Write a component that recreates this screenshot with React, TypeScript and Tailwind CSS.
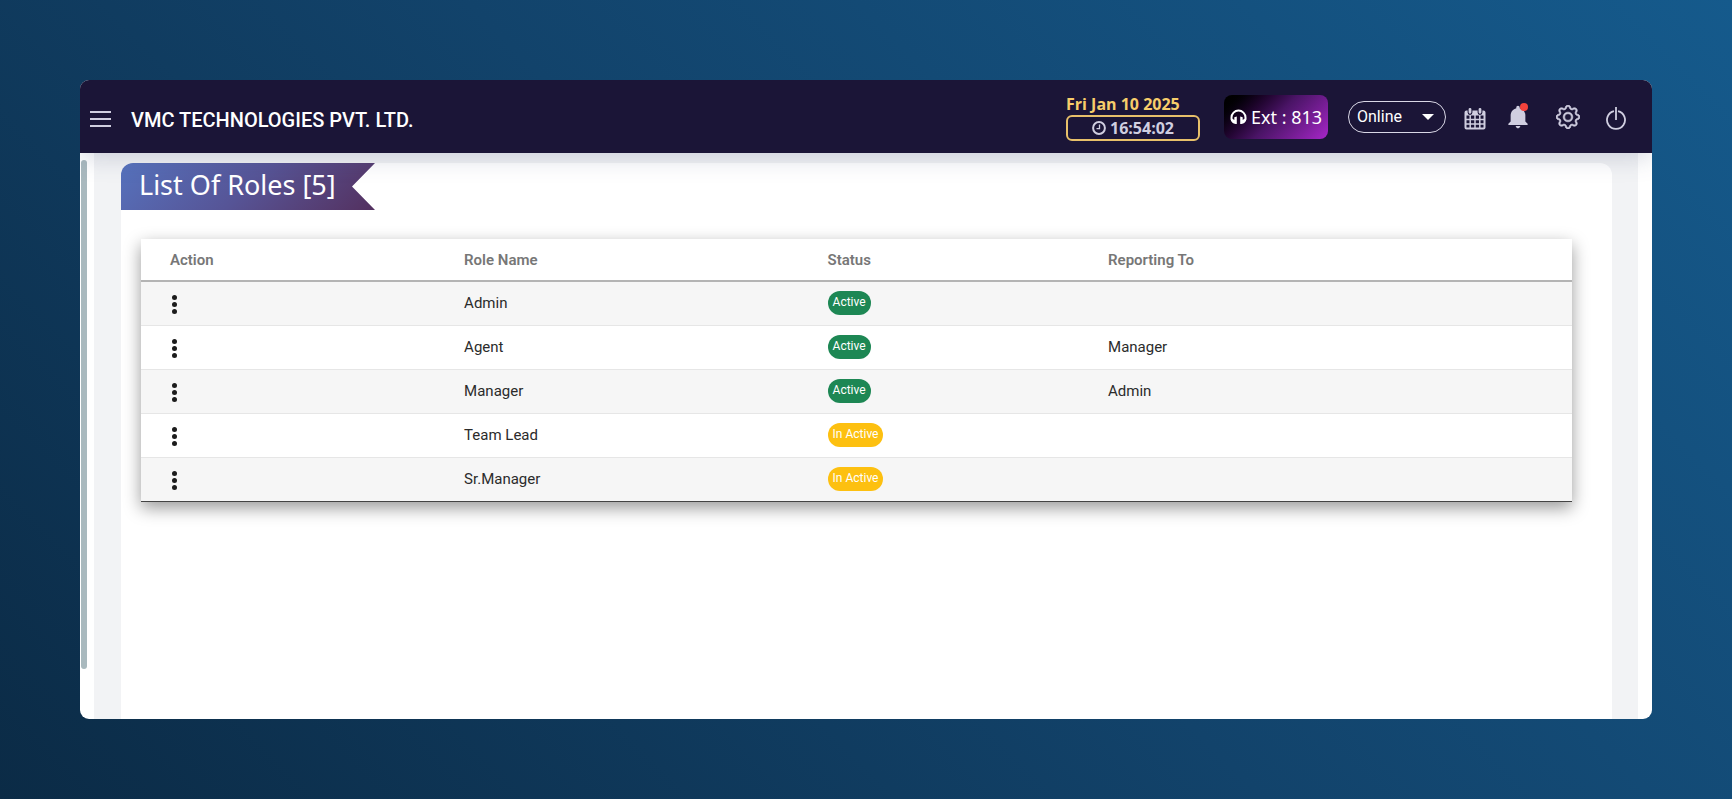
import { BsGear } from "react-icons/bs"
import { IoMdNotifications } from "react-icons/io"

type Role = {
  name: string
  active: boolean
  reportingTo: string
}

const roles: Role[] = [
  { name: "Admin", active: true, reportingTo: "" },
  { name: "Agent", active: true, reportingTo: "Manager" },
  { name: "Manager", active: true, reportingTo: "Admin" },
  { name: "Team Lead", active: false, reportingTo: "" },
  { name: "Sr.Manager", active: false, reportingTo: "" },
]

function HeadphonesIcon() {
  return (
    <svg viewBox="0 0 17 16" className="h-4 w-[17px]" fill="currentColor" aria-hidden="true">
      <path d="M1.500 10.500V8.500a7 6.900 0 0 1 14 0v2" fill="none" stroke="currentColor" strokeWidth="2" />
      <path d="M6.800 7.500v7.500H5.600C3 14.500.8 12.800.6 10.200L2.500 9.800 4.300 11V8.300z" />
      <path d="M10.200 7.500v7.500h1.200c2.600-.5 4.800-2.200 5-4.800l-1.900-.4-1.800 1.200V8.300z" />
    </svg>
  )
}

function ClockIcon() {
  return (
    <svg viewBox="0 0 14 14" className="h-[14px] w-[14px]" fill="none" stroke="currentColor" aria-hidden="true">
      <circle cx="7" cy="7" r="5.900" strokeWidth="2" />
      <path d="M7.500 3.500v4.200H4.500" strokeWidth="1.300" />
    </svg>
  )
}

function CalendarIcon() {
  return (
    <svg viewBox="0 0 22 23" className="h-[23px] w-[22px]" fill="none" stroke="currentColor" aria-hidden="true">
      <path d="M1 4h20v4.500H1z" fill="currentColor" stroke="none" />
      <rect x="1.500" y="4.500" width="19" height="17" rx="1" strokeWidth="2" />
      <path d="M2 12.500h18M2 17h18M6.200 8v14M11 8v14M15.800 8v14" strokeWidth="1.500" />
      <path d="M6 2.500v3M16 2.500v3" stroke="#1b1537" strokeWidth="4.800" strokeLinecap="round" />
      <path d="M6 2.300v3M16 2.300v3" strokeWidth="2.800" strokeLinecap="round" />
    </svg>
  )
}

function PowerIcon() {
  return (
    <svg viewBox="0 0 20 23" className="h-[23px] w-5" fill="none" stroke="currentColor" strokeWidth="1.800" aria-hidden="true">
      <path d="M8 4.200a9 9 0 1 0 4 0" />
      <path d="M10 0v13" />
    </svg>
  )
}

function Header() {
  return (
    <header className="relative z-10 flex h-[73px] shrink-0 items-center justify-between bg-[#1b1537] pl-[10px] pr-[26px] text-[#d0cee0] shadow-[0_4px_24px_rgba(80,90,130,0.25)]">
      <div className="flex items-center gap-5 pt-1">
        <button type="button" aria-label="Toggle menu" className="flex w-[21px] flex-col gap-[5px]">
          <span className="h-[2px] w-full bg-current" />
          <span className="h-[2px] w-full bg-current" />
          <span className="h-[2px] w-full bg-current" />
        </button>
        <h1 className="pt-[2px] font-[Roboto] text-xl leading-6 font-medium text-white">VMC TECHNOLOGIES PVT. LTD.</h1>
      </div>
      <div className="flex items-center">
        <div className="mr-6 w-[134px] pt-[2px] font-['Open_Sans',sans-serif] text-base font-bold">
          <div className="leading-5 text-[#f7cd6b]">Fri Jan 10 2025</div>
          <div className="mt-px flex h-[26px] items-center justify-center gap-1 rounded-md border-2 border-[#e8c06a]">
            <ClockIcon />
            16:54:02
          </div>
        </div>
        <div className="mr-5 flex h-11 w-[104px] items-center justify-center gap-1 rounded-lg bg-linear-135 from-black via-[#4a1466] to-[#a826c9] font-['Noto_Sans',sans-serif] text-lg text-white">
          <HeadphonesIcon />
          Ext : 813
        </div>
        <div className="relative mr-[18px]">
          <select aria-label="Agent status" className="h-8 w-[98px] appearance-none rounded-full border border-[#d9d7e6] pl-2 font-[Roboto] text-base text-white">
            <option>Online</option>
          </select>
          <span className="pointer-events-none absolute top-[13px] right-3 border-x-[6px] border-t-[6px] border-x-transparent border-t-white" />
        </div>
        <button type="button" aria-label="Calendar" className="mr-[18px] pt-[3px]">
          <CalendarIcon />
        </button>
        <button type="button" aria-label="Notifications" className="relative mr-6">
          <IoMdNotifications className="h-7 w-7" />
          <span className="absolute top-0 right-1 h-2 w-2 rounded-full bg-[#f4433c]" />
        </button>
        <button type="button" aria-label="Settings" className="mr-[26px]">
          <BsGear className="h-6 w-6" strokeWidth={0.4} />
        </button>
        <button type="button" aria-label="Log out" className="pt-1">
          <PowerIcon />
        </button>
      </div>
    </header>
  )
}

function StatusBadge({ active }: { active: boolean }) {
  return (
    <span
      className={`inline-flex h-6 items-center rounded-full px-[5px] pb-[2px] align-middle text-xs text-white ${
        active ? "bg-[#1d8754]" : "bg-[#fdc010]"
      }`}
    >
      {active ? "Active" : "In Active"}
    </span>
  )
}

function RolesTable() {
  return (
    <table className="w-full table-fixed border-collapse bg-white text-left font-[Roboto] text-[15px] text-[#2b2b2b] shadow-[0_6px_16px_rgba(0,0,0,0.4)]">
      <colgroup>
        <col className="w-[21.600%]" />
        <col className="w-[25.400%]" />
        <col className="w-[19.600%]" />
        <col />
      </colgroup>
      <thead>
        <tr className="h-[42px] border-b-2 border-[#b4b4b4] text-[#777777]">
          <th className="pt-[2px] pl-[29px] font-semibold">Action</th>
          <th className="pt-[2px] pl-[14px] font-semibold">Role Name</th>
          <th className="pt-[2px] pl-[14px] font-semibold">Status</th>
          <th className="pt-[2px] pl-[14px] font-semibold">Reporting To</th>
        </tr>
      </thead>
      <tbody>
        {roles.map((role) => (
          <tr key={role.name} className="h-11 border-b border-[#e6e6e6] odd:bg-[#f6f6f6] last:border-[#444444]">
            <td className="pl-[31px]">
              <button type="button" aria-label={`Actions for ${role.name}`} className="flex flex-col gap-[2px] pt-[2px]">
                <span className="h-[5px] w-[5px] rounded-full bg-[#1c1c1c]" />
                <span className="h-[5px] w-[5px] rounded-full bg-[#1c1c1c]" />
                <span className="h-[5px] w-[5px] rounded-full bg-[#1c1c1c]" />
              </button>
            </td>
            <td className="pl-[14px]">{role.name}</td>
            <td className="pl-[14px]">
              <StatusBadge active={role.active} />
            </td>
            <td className="pl-[14px]">{role.reportingTo}</td>
          </tr>
        ))}
      </tbody>
    </table>
  )
}

export default function App() {
  return (
    <div className="flex min-h-screen bg-linear-45 from-[#0b2b46] via-[#12436b] to-[#155a8c] p-20">
      <div className="flex flex-1 flex-col overflow-hidden rounded-[9px] bg-white">
        <Header />
        <div className="flex flex-1">
          {/* sidebar scrollbar */}
          <div className="w-[14px] shrink-0 pt-[7px] pl-px">
            <div className="h-[509px] w-[6px] rounded-full bg-[#a9b9be]" />
          </div>
          <main className="mr-[14px] flex flex-1 bg-[#f2f3f5] pt-[10px] pr-[26px] pl-[27px]">
            <section className="flex-1 rounded-t-xl bg-white pr-10 pb-10">
              <h2 className="h-[47px] w-[254px] rounded-tl-xl bg-linear-135 from-[#5572bd] via-[#565496] to-[#53305f] pl-[18px] font-['Noto_Sans',sans-serif] text-[27px] leading-[44px] text-white [clip-path:polygon(0_0,100%_0,calc(100%-23px)_50%,100%_100%,0_100%)]">
                List Of Roles [5]
              </h2>
              <div className="mt-[29px] ml-5">
                <RolesTable />
              </div>
            </section>
          </main>
        </div>
      </div>
    </div>
  )
}
